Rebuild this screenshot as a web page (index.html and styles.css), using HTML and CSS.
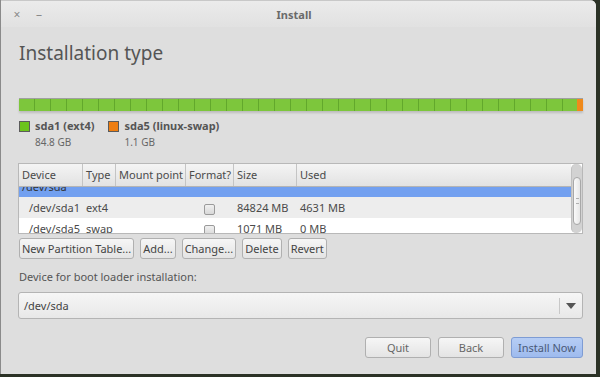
FILE: index.html
```html
<!DOCTYPE html>
<html lang="en">
<head>
    <meta charset="UTF-8">
    <title>Install</title>
    <link rel="stylesheet" href="styles.css">
</head>
<body>

    <!-- Installer window -->
    <div class="window">
        <div class="titlebar">
            <div class="win-controls">
                <span class="win-btn">&#215;</span>
                <span class="win-btn">&#8211;</span>
            </div>
            <div class="title">Install</div>
        </div>

        <div class="content">
            <h1>Installation type</h1>

            <!-- Partition bar -->
            <div class="part-bar">
                <div class="seg seg-ext4"></div>
                <div class="seg seg-swap"></div>
            </div>

            <div class="legend">
                <div class="legend-item">
                    <span class="swatch swatch-ext4"></span>
                    <div>
                        <div class="legend-name">sda1 (ext4)</div>
                        <div class="legend-size">84.8 GB</div>
                    </div>
                </div>
                <div class="legend-item">
                    <span class="swatch swatch-swap"></span>
                    <div>
                        <div class="legend-name">sda5 (linux-swap)</div>
                        <div class="legend-size">1.1 GB</div>
                    </div>
                </div>
            </div>

            <!-- Partition table -->
            <div class="table-box">
                <div class="table-main">
                    <div class="row head">
                        <div>Device</div>
                        <div>Type</div>
                        <div>Mount point</div>
                        <div>Format?</div>
                        <div>Size</div>
                        <div>Used</div>
                    </div>
                    <div class="rows">
                        <div class="rows-inner">
                            <div class="row selected">
                                <div>/dev/sda</div><div></div><div></div><div></div><div></div><div></div>
                            </div>
                            <div class="row odd">
                                <div class="indent">/dev/sda1</div><div>ext4</div><div></div><div class="check-cell"><span class="check"></span></div><div>84824 MB</div><div>4631 MB</div>
                            </div>
                            <div class="row">
                                <div class="indent">/dev/sda5</div><div>swap</div><div></div><div class="check-cell"><span class="check"></span></div><div>1071 MB</div><div>0 MB</div>
                            </div>
                        </div>
                    </div>
                </div>
                <div class="scrollbar">
                    <div class="thumb"><span class="grip"></span></div>
                </div>
            </div>

            <div class="part-buttons">
                <button class="btn">New Partition Table...</button>
                <button class="btn">Add...</button>
                <button class="btn">Change...</button>
                <button class="btn">Delete</button>
                <button class="btn">Revert</button>
            </div>

            <div class="boot-label">Device for boot loader installation:</div>
            <div class="combo">
                <span class="combo-value">/dev/sda</span>
                <span class="combo-arrow"></span>
            </div>

            <div class="actions">
                <button class="btn action">Quit</button>
                <button class="btn action">Back</button>
                <button class="btn action primary">Install Now</button>
            </div>
        </div>
    </div>

</body>
</html>
```

FILE: styles.css
```css
/* General Styling */
body {
    margin: 0;
    padding: 0;
    background-color: #2b3226;
    font-family: "Noto Sans", "Open Sans", sans-serif;
    font-size: 11px;
    color: #4a4a4a;
}

/* Window */
.window {
    width: 595px;
    height: 374px;
    background-color: #dedede;
    border-left: 1px solid #8a8a8a;
    border-top-right-radius: 6px;
    overflow: hidden;
}

.titlebar {
    height: 26px;
    background: linear-gradient(#ebebeb, #e1e1e1);
    border-top: 1px solid #c8c8c8;
    display: flex;
    align-items: center;
}

.win-controls {
    display: flex;
    gap: 10px;
    padding-left: 10px;
}

.win-btn {
    color: #8a8a8a;
    font-size: 12px;
    width: 12px;
    text-align: center;
}

.title {
    flex: 1;
    text-align: center;
    font-weight: bold;
    color: #6a6a6a;
    font-size: 11px;
    margin-right: 53px;
}

.content {
    padding: 0 13px 0 17px;
}

h1 {
    font-size: 19px;
    font-weight: normal;
    color: #555;
    margin: 13px 0 0 1px;
    height: 58px;
}

/* Partition bar */
.part-bar {
    display: flex;
    height: 12px;
    margin-left: 1px;
    border-top: 1px solid #a0a0a0;
    box-shadow: 0 2px 2px rgba(0, 0, 0, 0.15);
}

.seg-ext4 {
    flex: 1;
    background:
        repeating-linear-gradient(90deg, #7dc63c 0, #7dc63c 15px, #62a82c 15px, #62a82c 16px),
        #7dc63c;
}

.seg-swap {
    width: 6px;
    background-color: #ef8a1c;
}

.legend {
    display: flex;
    gap: 14px;
    margin: 8px 0 0 1px;
    height: 44px;
}

.legend-item {
    display: flex;
    gap: 5px;
}

.swatch {
    width: 9px;
    height: 9px;
    margin-top: 2px;
    border: 1px solid #5b5b5b;
}

.swatch-ext4 {
    background-color: #6cc41c;
}

.swatch-swap {
    background-color: #ee7e12;
}

.legend-name {
    font-weight: bold;
    color: #555;
    line-height: 14px;
}

.legend-size {
    font-size: 10px;
    color: #666;
    margin-top: 2px;
}

/* Partition table */
.table-box {
    display: flex;
    height: 69px;
    border: 1px solid #b8b8b8;
    background-color: #fff;
}

.table-main {
    flex: 1;
    display: flex;
    flex-direction: column;
}

.row {
    display: grid;
    grid-template-columns: 64px 33px 70px 48px 63px 1fr;
    height: 21px;
    align-items: center;
}

.row div {
    padding-left: 3px;
    white-space: nowrap;
    overflow: hidden;
}

.row.head {
    height: 22px;
    background: linear-gradient(#f4f4f4, #e2e2e2);
    border-bottom: 1px solid #b4b4b4;
    color: #4a4a4a;
}

.row.head div {
    height: 22px;
    line-height: 22px;
    border-right: 1px solid #c4c4c4;
}

.row.head div:last-child {
    border-right: none;
}

.rows {
    flex: 1;
    overflow: hidden;
}

.rows-inner {
    margin-top: -11px;
}

.row.selected {
    background-color: #72a0f0;
    color: #333;
}

.row.odd {
    background-color: #ededed;
}

.row .indent {
    padding-left: 10px;
}

.check-cell {
    text-align: center;
}

.check {
    display: inline-block;
    width: 9px;
    height: 9px;
    border: 1px solid #9a9a9a;
    border-radius: 2px;
    background: linear-gradient(#f0f0f0, #d8d8d8);
    margin-right: 4px;
    vertical-align: middle;
}

.scrollbar {
    width: 11px;
    background-color: #d2d2d2;
    border-left: 1px solid #c0c0c0;
    border-radius: 5px;
    padding: 13px 0 10px;
    box-sizing: border-box;
}

.thumb {
    height: 100%;
    margin: 0 1px;
    border: 1px solid #a8a8a8;
    border-radius: 5px;
    background: linear-gradient(90deg, #fafafa, #e6e6e6);
    display: flex;
    align-items: center;
    justify-content: center;
}

.grip {
    width: 3px;
    height: 4px;
    border-top: 1px solid #b0b0b0;
    border-bottom: 1px solid #b0b0b0;
}

/* Buttons */
.btn {
    font-family: "Noto Sans", "Open Sans", sans-serif;
    font-size: 11px;
    color: #444;
    height: 21px;
    padding: 0 2px;
    background: linear-gradient(#f6f6f6, #e4e4e4);
    border: 1px solid #b0b0b0;
    border-radius: 3px;
}

.part-buttons {
    display: flex;
    gap: 6px;
    margin: 4px 0 0 1px;
}

.boot-label {
    margin: 10px 0 0 1px;
    color: #555;
    height: 23px;
    line-height: 16px;
}

.combo {
    display: flex;
    align-items: center;
    height: 25px;
    border: 1px solid #b4b4b4;
    border-radius: 3px;
    background: linear-gradient(#f6f6f6, #e8e8e8);
}

.combo-value {
    flex: 1;
    padding-left: 5px;
    color: #444;
}

.combo-arrow {
    width: 22px;
    height: 16px;
    border-left: 1px solid #c8c8c8;
    position: relative;
}

.combo-arrow::after {
    content: "";
    position: absolute;
    left: 6px;
    top: 5px;
    border-left: 5px solid transparent;
    border-right: 5px solid transparent;
    border-top: 6px solid #555;
}

.actions {
    display: flex;
    justify-content: flex-end;
    gap: 7px;
    margin-top: 18px;
}

.btn.action {
    width: 66px;
    color: #666;
}

.btn.primary {
    width: 72px;
    color: #4a5a78;
    background: linear-gradient(#b6cdf4, #9ebbee);
    border-color: #7e9cd4;
}
```
